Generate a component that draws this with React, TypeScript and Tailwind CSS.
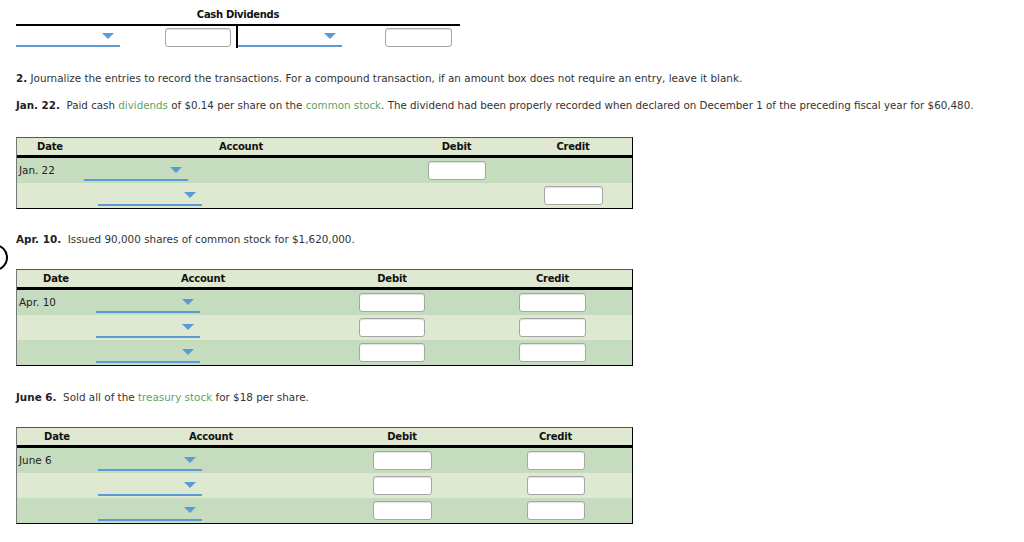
import React from "react";

const font = { fontFamily: '"DejaVu Sans", Verdana, sans-serif' };

function Select({ className = "" }: { className?: string }) {
  return (
    <div className={`relative h-[20px] w-[104px] border-b-2 border-[#5b9bd5] ${className}`}>
      <span className="absolute right-[6px] top-[6px] h-0 w-0 border-x-[6px] border-t-[6px] border-x-transparent border-t-[#5b9bd5]" />
    </div>
  );
}

function Box({ w }: { w: string }) {
  return (
    <div className={`h-[19px] ${w} rounded-[3px] border border-[#a6a6a6] bg-white shadow-[inset_0_1px_1px_rgba(0,0,0,0.12)]`} />
  );
}

type Row = { date?: string; indent?: boolean; debit: boolean; credit: boolean };

function Journal({
  cols,
  rows,
  debitW,
  creditW,
}: {
  cols: string;
  rows: Row[];
  debitW: string;
  creditW: string;
}) {
  return (
    <div className="w-[617px] border border-t-[#555] border-l-[#777] border-r-black border-b-black">
      <div className={`grid ${cols} h-[20px] items-center bg-[#dfe8d1] border-b-[3px] border-black text-[10px] font-bold tracking-[-0.2px] text-[#111]`}>
        <div className="text-center">Date</div>
        <div className="text-center">Account</div>
        <div className="text-center">Debit</div>
        <div className="text-center">Credit</div>
      </div>
      {rows.map((r, i) => (
        <div
          key={i}
          className={`grid ${cols} h-[25px] items-center ${i % 2 === 0 ? "bg-[#c6dcbe]" : "bg-[#dfe8d1]"}`}
        >
          <div className="pl-[2px] text-[10.4px] text-[#222]">{r.date}</div>
          <div className={r.indent ? "pl-[15px]" : "pl-[1px]"}>
            <Select />
          </div>
          <div className="flex justify-center">{r.debit && <Box w={debitW} />}</div>
          <div className="flex justify-center">{r.credit && <Box w={creditW} />}</div>
        </div>
      ))}
    </div>
  );
}

export default function App() {
  return (
    <div className="relative h-[542px] w-[1024px] overflow-hidden bg-white text-[#333]" style={font}>
      {/* partial circle at the left edge */}
      <div className="absolute left-[-20px] top-[244px] h-[27px] w-[28px] rounded-full border-2 border-black" />

      <div className="pl-[16px]">
        {/* T account */}
        <div className="w-[444px]">
          <div className="pt-[8px] text-center text-[10px] font-bold leading-[14px] tracking-[-0.3px] text-[#111]">Cash Dividends</div>
          <div className="mt-[2px] flex h-[24px] border-t-2 border-black">
            <div className="flex w-[222px] items-start border-r-2 border-black pt-[1px]">
              <Select />
              <div className="ml-[45px] mt-[1px]">
                <Box w="w-[66px]" />
              </div>
            </div>
            <div className="flex w-[222px] items-start pt-[1px]">
              <Select />
              <div className="ml-[43px] mt-[1px]">
                <Box w="w-[67px]" />
              </div>
            </div>
          </div>
        </div>

        <p className="mt-[22px] text-[10.4px] leading-[16px]">
          <b className="text-[#222]">2.</b> Journalize the entries to record the transactions. For a compound transaction, if an amount box does not require an entry, leave it blank.
        </p>
        <p className="mt-[11px] text-[10.3px] leading-[16px]">
          <b className="text-[#222]">Jan. 22.</b>&nbsp; Paid cash <span className="text-[#5fa35f]">dividends</span> of $0.14 per share on the{" "}
          <span className="text-[#5fa35f]">common stock</span>. The dividend had been properly recorded when declared on December 1 of the preceding fiscal year for $60,480.
        </p>

        <div className="mt-[24px]">
          <Journal
            cols="grid-cols-[66px_316px_115px_118px]"
            debitW="w-[58px]"
            creditW="w-[59px]"
            rows={[
              { date: "Jan. 22", debit: true, credit: false },
              { indent: true, debit: false, credit: true },
            ]}
          />
        </div>

        <p className="mt-[22px] text-[10.4px] leading-[16px]">
          <b className="text-[#222]">Apr. 10.</b>&nbsp; Issued 90,000 shares of common stock for $1,620,000.
        </p>

        <div className="mt-[22px]">
          <Journal
            cols="grid-cols-[78px_216px_162px_159px]"
            debitW="w-[66px]"
            creditW="w-[67px]"
            rows={[
              { date: "Apr. 10", debit: true, credit: true },
              { debit: true, credit: true },
              { debit: true, credit: true },
            ]}
          />
        </div>

        <p className="mt-[23px] text-[10.4px] leading-[16px]">
          <b className="text-[#222]">June 6.</b>&nbsp; Sold all of the <span className="text-[#5fa35f]">treasury stock</span> for $18 per share.
        </p>

        <div className="mt-[22px]">
          <Journal
            cols="grid-cols-[80px_228px_154px_153px]"
            debitW="w-[59px]"
            creditW="w-[58px]"
            rows={[
              { date: "June 6", debit: true, credit: true },
              { debit: true, credit: true },
              { debit: true, credit: true },
            ]}
          />
        </div>
      </div>
    </div>
  );
}
